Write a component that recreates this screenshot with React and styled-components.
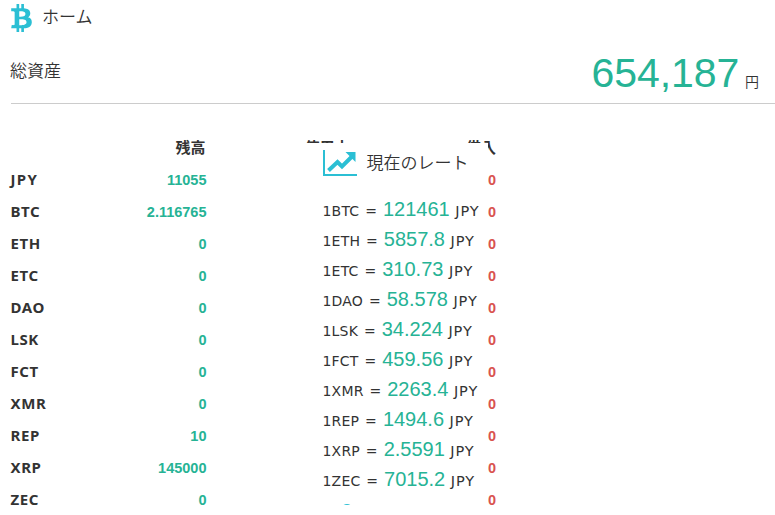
import React from 'react'
import styled, { createGlobalStyle } from 'styled-components'
import { FaBtc } from 'react-icons/fa'

const LATIN = '"DejaVu Sans", "Noto Sans CJK JP", sans-serif'
const NUMBER = '"Liberation Sans", Arial, sans-serif'
const GREEN = '#26b395'
const CYAN = '#2bbfd4'

const GlobalStyle = createGlobalStyle`
  * {
    box-sizing: border-box;
  }
  body {
    margin: 0;
    background: #fff;
    color: #333;
    font-family: "Noto Sans CJK JP", sans-serif;
    overflow: hidden;
  }
`

const Page = styled.main`
  height: 515px;
  padding-left: 11px;
  overflow: hidden;
`

const Header = styled.header`
  display: flex;
  align-items: center;
  height: 34px;
`

const BitcoinIcon = styled(FaBtc)`
  width: 21px;
  height: 28px;
  margin-top: 2px;
  color: ${CYAN};
`

const Title = styled.h1`
  margin: 0 0 0 10px;
  font-size: 17px;
  line-height: 32px;
  height: 34px;
  font-weight: 350;
`

const Total = styled.section`
  display: flex;
  justify-content: space-between;
  height: 70px;
  padding-right: 16px;
  border-bottom: 1px solid #ccc;
`

const TotalLabel = styled.span`
  margin: 23px 0 0 -1px;
  font-size: 17px;
  line-height: 25px;
  font-weight: 350;
`

const TotalValue = styled.div`
  display: flex;
  align-items: baseline;
  margin-top: 15px;
  height: 48px;
  color: ${GREEN};
  font-family: ${NUMBER};
  font-size: 41px;
  letter-spacing: -0.1px;
  line-height: 48px;
  small {
    margin-left: 6px;
    color: #333;
    font-family: "Noto Sans CJK JP", sans-serif;
    font-size: 14px;
    line-height: 20px;
    font-weight: 350;
  }
`

const Balances = styled.section`
  margin-top: 27px;
`

const Row = styled.div`
  display: grid;
  grid-template-columns: 50px 145.5px 143px 146.5px;
  height: 32px;
  line-height: 32px;
  text-align: right;
`

const HeadCell = styled.span`
  padding-right: ${props => props.$inset || 0}px;
  font-size: 15px;
  font-weight: 700;
`

const Currency = styled.span`
  margin-left: -0.5px;
  text-align: left;
  font-family: "Noto Sans", sans-serif;
  font-size: 15px;
  line-height: 32px;
  font-weight: 700;
  letter-spacing: ${props => props.$track}px;
`

const Amount = styled.span`
  color: ${props => props.$debt ? '#d9534f' : GREEN};
  font-family: ${NUMBER};
  font-size: 14.5px;
  line-height: 34px;
  font-weight: 700;
`

const RatePanel = styled.aside`
  position: absolute;
  top: 143px;
  left: 300px;
  width: 188px;
  height: 362px;
  padding-left: 22.5px;
  overflow: hidden;
  background: #fff;
`

const RateTitle = styled.h2`
  display: flex;
  align-items: center;
  height: 51px;
  margin: 0;
  padding-bottom: 15px;
  font-size: 17px;
  font-weight: 350;
  svg {
    margin: 3px 10px 0 0;
  }
`

const Rate = styled.div`
  display: flex;
  align-items: baseline;
  height: 30px;
  font-family: ${LATIN};
  font-size: 14px;
  line-height: 30px;
  white-space: pre;
`

const RateLabel = styled.span`
  letter-spacing: 0.2px;
  word-spacing: 1.2px;
`

const RateValue = styled.span`
  color: ${GREEN};
  font-family: ${NUMBER};
  font-size: 20px;
`

const Unit = styled.span`
  margin-left: 5.5px;
  font-size: 14.5px;
  letter-spacing: 0.9px;
`

const NextIcon = styled.span`
  display: block;
  width: 12px;
  height: 12px;
  margin: 10px 0 0 18px;
  border-radius: 50%;
  background: ${CYAN};
`

const balances = [
  ['JPY', '11055'],
  ['BTC', '2.116765'],
  ['ETH', '0'],
  ['ETC', '0'],
  ['DAO', '0'],
  ['LSK', '0'],
  ['FCT', '0'],
  ['XMR', '0'],
  ['REP', '10'],
  ['XRP', '145000'],
  ['ZEC', '0'],
]

const rates = [
  ['BTC', '121461'],
  ['ETH', '5857.8'],
  ['ETC', '310.73'],
  ['DAO', '58.578'],
  ['LSK', '34.224'],
  ['FCT', '459.56'],
  ['XMR', '2263.4'],
  ['REP', '1494.6'],
  ['XRP', '2.5591'],
  ['ZEC', '7015.2'],
]

function ChartIcon () {
  return (
    <svg width="34" height="26" viewBox="0 0 34 26" fill="none" stroke={CYAN}>
      <path d="M1 0v25h33" strokeWidth="2" />
      <path d="M5.5 20.5l9-8.5 4.5 4.5L29 6.5" strokeWidth="4" />
      <path d="M22.5 2h10v10z" fill={CYAN} stroke="none" />
    </svg>
  )
}

export default function App () {
  return (
    <Page>
      <GlobalStyle />
      <Header>
        <BitcoinIcon preserveAspectRatio="none" />
        <Title>ホーム</Title>
      </Header>
      <Total>
        <TotalLabel>総資産</TotalLabel>
        <TotalValue>654,187<small>円</small></TotalValue>
      </Total>
      <Balances>
        <Row>
          <span />
          <HeadCell $inset={1}>残高</HeadCell>
          <HeadCell>使用中</HeadCell>
          <HeadCell>借入</HeadCell>
        </Row>
        {balances.map(([name, amount]) => (
          <Row key={name}>
            <Currency $track={name === 'JPY' ? 1.4 : 0.6}>{name}</Currency>
            <Amount>{amount}</Amount>
            <span />
            <Amount $debt>0</Amount>
          </Row>
        ))}
      </Balances>
      <RatePanel>
        <RateTitle><ChartIcon />現在のレート</RateTitle>
        {rates.map(([name, value]) => (
          <Rate key={name}>
            <RateLabel>1{name} = </RateLabel>
            <RateValue>{value}</RateValue>
            <Unit>JPY</Unit>
          </Rate>
        ))}
        <NextIcon />
      </RatePanel>
    </Page>
  )
}
